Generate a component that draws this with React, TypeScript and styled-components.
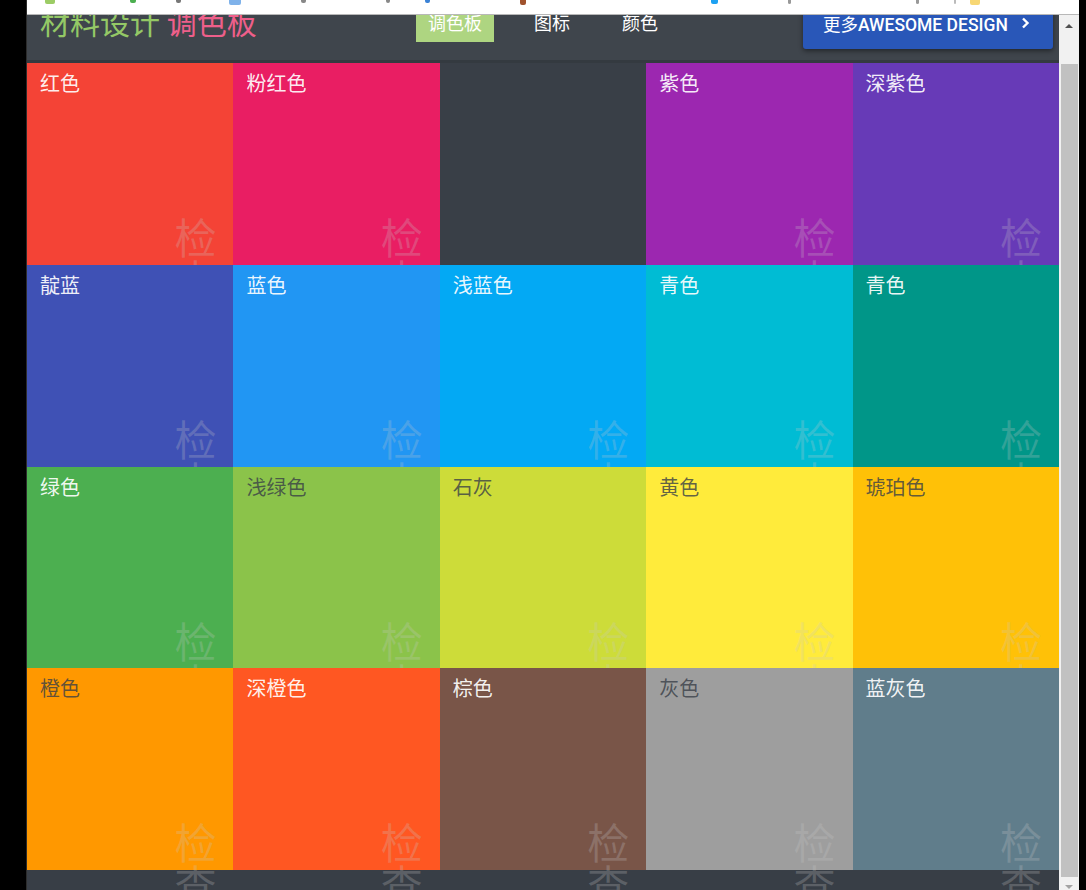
import React from "react";
import styled, { createGlobalStyle } from "styled-components";

const GlobalStyle = createGlobalStyle`
  html, body { margin: 0; padding: 0; background: #000; }
  body { font-family: "Noto Sans CJK SC", sans-serif; overflow: hidden; }
  #root { height: 890px; }
`;

const Screen = styled.div`
  display: flex;
  width: 1086px;
  height: 890px;
  overflow: hidden;
  background: #000;
`;

const Edge = styled.div<{ $w: number }>`
  flex: none;
  width: ${(p) => p.$w}px;
  background: #000;
`;

const Window = styled.div`
  position: relative;
  flex: 1;
  min-width: 0;
  display: flex;
  border-left: 1px solid #2c2c2c;
  overflow: hidden;
`;

const BookmarkBar = styled.div`
  position: absolute;
  top: 0;
  left: -1px;
  right: 0;
  height: 14px;
  background: #fff;
  border-bottom: 1px solid #b8b8b8;
  z-index: 10;
  display: flex;
  align-items: flex-start;
  overflow: hidden;
`;

const Fragment = styled.span<{ $w: number; $h: number; $c: string; $ml: number }>`
  flex: none;
  width: ${(p) => p.$w}px;
  height: ${(p) => p.$h}px;
  margin-left: ${(p) => p.$ml}px;
  background: ${(p) => p.$c};
  border-radius: 0 0 2px 2px;
`;

const Page = styled.div`
  flex: 1;
  min-width: 0;
  display: flex;
  flex-direction: column;
  background: #383e46;
`;

const Header = styled.header`
  flex: none;
  height: 60px;
  background: #3f454c;
  display: grid;
  grid-template-columns: 1fr auto 1fr;
  align-items: start;
`;

const Title = styled.h1`
  margin: 6px 0 0 13px;
  font-size: 30px;
  line-height: 30px;
  font-weight: 400;
  white-space: nowrap;
`;

const TitlePart = styled.span<{ $c: string }>`
  color: ${(p) => p.$c};
`;

const Nav = styled.nav`
  display: flex;
  gap: 28px;
  margin-top: 3px;
`;

const NavItem = styled.a<{ $active?: boolean }>`
  display: block;
  height: 39px;
  line-height: 38px;
  padding: 0 12px;
  font-size: 18px;
  color: #fff;
  text-decoration: none;
  background: ${(p) => (p.$active ? "#aed581" : "transparent")};
`;

const MoreButton = styled.button`
  justify-self: end;
  margin-right: 6px;
  width: 250px;
  height: 49px;
  border: none;
  border-radius: 0 0 3px 3px;
  background: #2957b8;
  box-shadow: 0 2px 5px rgba(0, 0, 0, 0.45);
  color: #fff;
  display: flex;
  align-items: center;
  padding: 0 0 0 20px;
  font-family: Roboto, "Noto Sans CJK SC", sans-serif;
  font-size: 17.5px;
  font-weight: 500;
  cursor: pointer;
`;

const ButtonText = styled.span`
  line-height: 1;
  white-space: nowrap;
`;

const CjkPart = styled.span`
  font-family: "Noto Sans CJK SC", sans-serif;
  font-weight: 400;
`;

const Chevron = styled.svg`
  margin-left: 13px;
  margin-top: -3px;
  flex: none;
`;

const Grid = styled.main`
  flex: none;
  display: grid;
  grid-template-columns: repeat(5, 1fr);
  grid-template-rows: repeat(4, 201.75px);
  border-top: 3px solid #343a40;
`;

const Cell = styled.div<{ $bg: string; $dark?: boolean }>`
  position: relative;
  background: ${(p) => p.$bg};
  padding: 8px 13px;
  font-size: 20px;
  line-height: 24px;
  color: ${(p) => (p.$dark ? "rgba(57, 63, 71, 0.8)" : "rgba(255, 255, 255, 0.93)")};
`;

const Watermark = styled.span`
  position: absolute;
  top: 152px;
  right: 17px;
  width: 1em;
  font-size: 42px;
  line-height: 42px;
  color: rgba(200, 200, 200, 0.25);
  pointer-events: none;
`;

const Scrollbar = styled.div`
  flex: none;
  width: 20px;
  background: #f1f1f1;
  display: flex;
  flex-direction: column;
  padding-top: 15px;
  overflow: hidden;
`;

const ScrollButton = styled.div<{ $h: number; $down?: boolean }>`
  flex: none;
  height: ${(p) => p.$h}px;
  display: flex;
  align-items: center;
  justify-content: center;
  &::after {
    content: "";
    width: 0;
    height: 0;
    border-left: 4px solid transparent;
    border-right: 4px solid transparent;
    ${(p) =>
      p.$down
        ? "border-top: 4px solid #a3a3a3;"
        : "border-bottom: 4px solid #505050;"}
  }
`;

const Thumb = styled.div<{ $offset: number; $h: number }>`
  flex: none;
  margin: ${(p) => p.$offset}px 1px 0 2px;
  height: ${(p) => p.$h}px;
  background: #c1c1c1;
`;

type Swatch = { name?: string; bg: string; dark?: boolean };

const swatches: Swatch[] = [
  { name: "红色", bg: "#f44336" },
  { name: "粉红色", bg: "#e91e63" },
  { bg: "#393f47" },
  { name: "紫色", bg: "#9c27b0" },
  { name: "深紫色", bg: "#673ab7" },
  { name: "靛蓝", bg: "#3f51b5" },
  { name: "蓝色", bg: "#2196f3" },
  { name: "浅蓝色", bg: "#03a9f4" },
  { name: "青色", bg: "#00bcd4" },
  { name: "青色", bg: "#009688" },
  { name: "绿色", bg: "#4caf50" },
  { name: "浅绿色", bg: "#8bc34a", dark: true },
  { name: "石灰", bg: "#cddc39", dark: true },
  { name: "黄色", bg: "#ffeb3b", dark: true },
  { name: "琥珀色", bg: "#ffc107", dark: true },
  { name: "橙色", bg: "#ff9800", dark: true },
  { name: "深橙色", bg: "#ff5722" },
  { name: "棕色", bg: "#795548" },
  { name: "灰色", bg: "#9e9e9e", dark: true },
  { name: "蓝灰色", bg: "#607d8b" },
];

const fragments = [
  { w: 10, h: 4, c: "#9ccc65", ml: 19 },
  { w: 6, h: 3, c: "#4caf50", ml: 75 },
  { w: 5, h: 3, c: "#777", ml: 40 },
  { w: 12, h: 5, c: "#7fb2ea", ml: 48 },
  { w: 5, h: 3, c: "#888", ml: 60 },
  { w: 4, h: 3, c: "#888", ml: 80 },
  { w: 5, h: 3, c: "#3b82d6", ml: 35 },
  { w: 6, h: 5, c: "#a0522d", ml: 90 },
  { w: 7, h: 4, c: "#1da1f2", ml: 185 },
  { w: 3, h: 4, c: "#999", ml: 70 },
  { w: 3, h: 4, c: "#999", ml: 125 },
  { w: 2, h: 4, c: "#bbb", ml: 35 },
  { w: 10, h: 5, c: "#f7d774", ml: 14 },
];

export default function App() {
  return (
    <>
      <GlobalStyle />
      <Screen>
        <Edge $w={26} />
        <Window>
          <BookmarkBar>
            {fragments.map((f, i) => (
              <Fragment key={i} $w={f.w} $h={f.h} $c={f.c} $ml={f.ml} />
            ))}
          </BookmarkBar>
          <Page>
            <Header>
              <Title>
                <TitlePart $c="#94c866">材料设计</TitlePart>{" "}
                <TitlePart $c="#ee5f8a">调色板</TitlePart>
              </Title>
              <Nav>
                <NavItem $active>调色板</NavItem>
                <NavItem>图标</NavItem>
                <NavItem>颜色</NavItem>
              </Nav>
              <MoreButton>
                <ButtonText>
                  <CjkPart>更多</CjkPart>AWESOME DESIGN
                </ButtonText>
                <Chevron width="9" height="12" viewBox="0 0 9 12">
                  <polyline
                    points="2,1.5 6.5,6 2,10.5"
                    fill="none"
                    stroke="#fff"
                    strokeWidth="2.4"
                  />
                </Chevron>
              </MoreButton>
            </Header>
            <Grid>
              {swatches.map((s, i) => (
                <Cell key={i} $bg={s.bg} $dark={s.dark}>
                  {s.name}
                  {s.name && <Watermark>检查</Watermark>}
                </Cell>
              ))}
            </Grid>
          </Page>
          <Scrollbar>
            <ScrollButton $h={21} />
            <Thumb $offset={28} $h={813} />
            <ScrollButton $h={20} $down />
          </Scrollbar>
        </Window>
        <Edge $w={7} />
      </Screen>
    </>
  );
}
